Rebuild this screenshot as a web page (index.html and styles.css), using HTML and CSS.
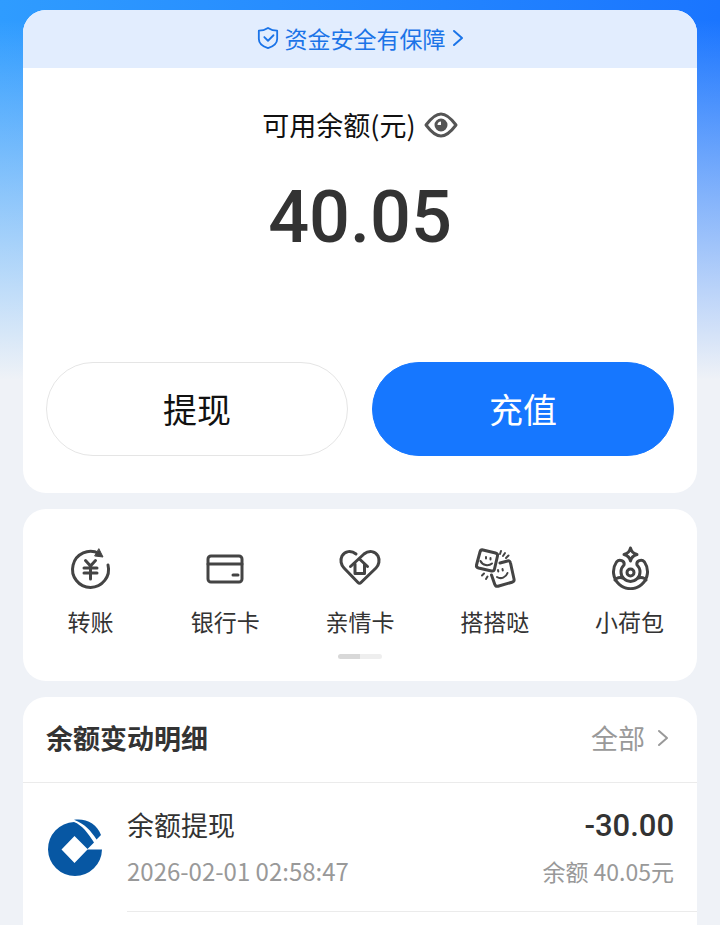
FILE: index.html
```html
<!DOCTYPE html>
<html lang="zh-CN">
<head>
    <meta charset="UTF-8">
    <meta name="viewport" content="width=device-width, initial-scale=1.0">
    <title>余额</title>
    <link rel="stylesheet" href="styles.css">
</head>
<body>

    <main class="page">
        <section class="card balance">
            <a class="safety" href="#">
                <svg class="shield" width="22" height="24" viewBox="0 0 24 26">
                    <path d="M12 2C9 4 6 5 2 5v9c0 5 4 8 10 10 6-2 10-5 10-10V5c-4 0-7-1-10-3z"/>
                    <path d="M8 12l4 4 6-6"/>
                </svg>
                <span>资金安全有保障</span>
                <svg class="arrow" width="12" height="18" viewBox="0 0 12 18">
                    <path d="M2 2l8 7-8 7"/>
                </svg>
            </a>
            <div class="balance-body">
                <div class="balance-label">
                    <span>可用余额(元)</span>
                    <button class="eye" type="button" aria-label="隐藏余额">
                        <svg width="34" height="28" viewBox="0 0 34 28">
                            <path d="M2 14C8 6 13 3 17 3s9 3 15 11c-6 8-11 11-15 11S8 22 2 14z"/>
                            <circle cx="17" cy="14" r="5"/>
                            <path class="pupil" d="M17 9v5h-5a5 5 0 1 0 5-5z"/>
                        </svg>
                    </button>
                </div>
                <p class="balance-amount">40.05</p>
                <div class="actions">
                    <button class="btn" type="button">提现</button>
                    <button class="btn btn-primary" type="button">充值</button>
                </div>
            </div>
        </section>

        <section class="card services">
            <nav class="service-list">
                <a class="service" href="#">
                    <svg width="44" height="44" viewBox="0 0 44 44">
                        <path d="M40 19a18 18 0 1 1-9-11.5"/>
                        <path class="solid" d="M31 3l4 8-8-1z"/>
                        <path d="M17.500 14.500l5 5.500 5-5.500M22.500 20v13M16 22h13M16 27h13"/>
                    </svg>
                    <span>转账</span>
                </a>
                <a class="service" href="#">
                    <svg width="44" height="44" viewBox="0 0 44 44">
                        <rect x="5" y="10" width="34" height="26" rx="3"/>
                        <path d="M5 18h34M30 29h5"/>
                    </svg>
                    <span>银行卡</span>
                </a>
                <a class="service" href="#">
                    <svg width="44" height="44" viewBox="0 0 44 44">
                        <path d="M18 8C13 4 7 5 4 10c-2 4-1 9 2 12l14 14.500q1.500 1.500 3 0L38 22c3-3 4-8 2-12-3-5-9-6-14-2L12.500 20.500"/>
                        <path d="M17 18v9.500h9.500V18M22 13.500l7.500 7"/>
                    </svg>
                    <span>亲情卡</span>
                </a>
                <a class="service" href="#">
                    <svg width="44" height="44" viewBox="0 0 44 44">
                        <path d="M10 4l12.500 3q2.500.6 2 3L21.500 23q-.6 2.500-3 2L5.500 22Q3 21.300 3.500 19L7 6q.7-2.600 3-2z"/>
                        <path d="M27 17l7.500-2q2.500-.7 3 2L41 33q.6 2.500-2 3.200l-14 4q-2.500.7-3.200-1.800L18.500 29"/>
                        <path class="fine" d="M13 11v1.500M17.500 12v1.500M7.500 15c2 4.500 8 5.500 11.500 2.500M25 24l.3 1.500M29.500 23l.3 1.500M24 31c4 2.500 9 .5 10.500-4"/>
                        <path class="fine" d="M28 5l-1 3M32 7l-2 3M35.500 9.500L33 12M11 27.500L9 29.500M14.500 30.500L13 33"/>
                    </svg>
                    <span>搭搭哒</span>
                </a>
                <a class="service" href="#">
                    <svg width="44" height="44" viewBox="0 0 44 44">
                        <path d="M22.500 2q1 5 6.500 6.500-5.500 1.500-6.500 6.500-1-5-6.500-6.500Q21.500 7 22.500 2z"/>
                        <path d="M8.500 16c3-3.500 8.500-1 7.500 3a9.500 9.500 0 1 0 13 0c-1-4 4.500-6.500 7.500-3A17 17 0 1 1 8.500 16z"/>
                        <circle cx="22.500" cy="26.500" r="3.500"/>
                        <path d="M7 34c1-2.500 5-3 8-2M38 34c-1-2.500-5-3-8-2"/>
                    </svg>
                    <span>小荷包</span>
                </a>
            </nav>
            <div class="pager"></div>
        </section>

        <section class="card records">
            <header class="records-header">
                <h2>余额变动明细</h2>
                <a class="all" href="#">
                    <span>全部</span>
                    <svg class="arrow" width="12" height="18" viewBox="0 0 12 18">
                        <path d="M2 2l8 7-8 7"/>
                    </svg>
                </a>
            </header>
            <article class="record">
                <svg class="bank-logo" width="56" height="58" viewBox="0 0 56 58">
                    <path d="M27 3C35 6 41 14 47 23.500L40.500 30 27.500 17l-13 13.500 13 13.500 13-13.500H55A27 27 0 1 1 27 3z"/>
                    <path d="M27 .8C39-1 50 5 54 16l-4.500 4.500C44 12 38 5 27 .8z"/>
                </svg>
                <div class="record-body">
                    <div class="record-line">
                        <span class="record-title">余额提现</span>
                        <span class="record-amount">-30.00</span>
                    </div>
                    <div class="record-line record-meta">
                        <time datetime="2026-02-01T02:58:47">2026-02-01 02:58:47</time>
                        <span class="record-balance">余额 40.05元</span>
                    </div>
                </div>
            </article>
        </section>
    </main>

</body>
</html>
```

FILE: styles.css
```css
* {
    box-sizing: border-box;
}
body {
    margin: 0;
    font-family: "Noto Sans CJK SC", sans-serif;
    color: #333;
    background-color: #eff2f7;
}
h2, p {
    margin: 0;
}
a {
    color: inherit;
    text-decoration: none;
}
button {
    font-family: inherit;
    cursor: pointer;
}
svg {
    display: block;
    flex: none;
    fill: none;
    stroke: currentColor;
    stroke-width: 2;
    stroke-linecap: round;
    stroke-linejoin: round;
}
.page {
    display: flex;
    flex-direction: column;
    gap: 16px;
    min-height: 100vh;
    padding: 10px 23px 0;
    background:
        linear-gradient(to bottom, rgba(239, 242, 247, 0) 20px, rgba(239, 242, 247, 0.5) 200px, #eff2f7 380px) no-repeat,
        linear-gradient(to right, #2f9cff, #1a75ff) no-repeat;
    background-size: 100% 100%, 100% 380px;
}
.card {
    background-color: white;
    border-radius: 23px;
    overflow: hidden;
}

/* 余额 */
.safety {
    display: flex;
    align-items: center;
    justify-content: center;
    gap: 6px;
    height: 58px;
    padding-bottom: 2px;
    font-size: 23px;
    line-height: 32px;
    color: #1b74e8;
    background-color: #e2edfe;
}
.balance-body {
    padding: 39px 23px 37px;
}
.balance-label {
    display: flex;
    align-items: center;
    justify-content: center;
    gap: 8px;
    font-size: 27px;
    line-height: 36px;
    color: #111;
}
.eye {
    padding: 0;
    border: none;
    background: none;
    color: #555;
}
.eye svg {
    stroke-width: 3;
}
.eye .pupil {
    fill: currentColor;
    stroke: none;
}
.balance-amount {
    margin-top: 33px;
    font-family: Roboto, sans-serif;
    font-size: 72px;
    font-weight: 500;
    line-height: 84px;
    text-align: center;
}
.actions {
    display: flex;
    gap: 24px;
    margin-top: 102px;
}
.btn {
    flex: 1;
    height: 94px;
    padding: 0 0 2px;
    border: 1px solid #e5e5e5;
    border-radius: 47px;
    background-color: white;
    color: #111;
    font-size: 34px;
}
.btn-primary {
    border-color: #1677ff;
    background-color: #1677ff;
    color: white;
}

/* 服务入口 */
.services {
    padding: 37px 0 22px;
}
.service-list {
    display: grid;
    grid-template-columns: repeat(5, 1fr);
}
.service {
    display: flex;
    flex-direction: column;
    align-items: center;
    gap: 15px;
    font-size: 23px;
    line-height: 32px;
}
.service svg {
    stroke-width: 3;
    color: #444;
}
.service .solid {
    fill: currentColor;
    stroke-width: 1;
}
.service .fine {
    stroke-width: 2;
}
.pager {
    width: 44px;
    height: 5px;
    margin: 17px auto 0;
    border-radius: 3px;
    background: linear-gradient(to right, #d8d8d8 50%, #eee 50%);
}

/* 明细 */
.records {
    flex: 1;
    border-radius: 23px 23px 0 0;
}
.records-header {
    display: flex;
    align-items: center;
    justify-content: space-between;
    height: 86px;
    padding: 0 23px 3px;
    border-bottom: 1px solid #ebebeb;
}
.records-header h2 {
    font-size: 27px;
    line-height: 36px;
}
.all {
    display: flex;
    align-items: center;
    gap: 12px;
    padding-right: 5px;
    font-size: 27px;
    line-height: 36px;
    color: #999;
}
.record {
    display: flex;
    gap: 24px;
    padding-left: 24px;
}
.bank-logo {
    margin-top: 36px;
    fill: #0757a3;
    stroke: none;
}
.record-body {
    flex: 1;
    padding: 24px 23px 22px 0;
    border-bottom: 1px solid #ebebeb;
}
.record-line {
    display: flex;
    align-items: baseline;
    justify-content: space-between;
    font-size: 27px;
    line-height: 36px;
}
.record-amount {
    font-family: Roboto, sans-serif;
    font-size: 31px;
    font-weight: 500;
}
.record-meta {
    margin-top: 9px;
    font-size: 24px;
    color: #999;
}
.record-balance {
    font-size: 23px;
}
```
